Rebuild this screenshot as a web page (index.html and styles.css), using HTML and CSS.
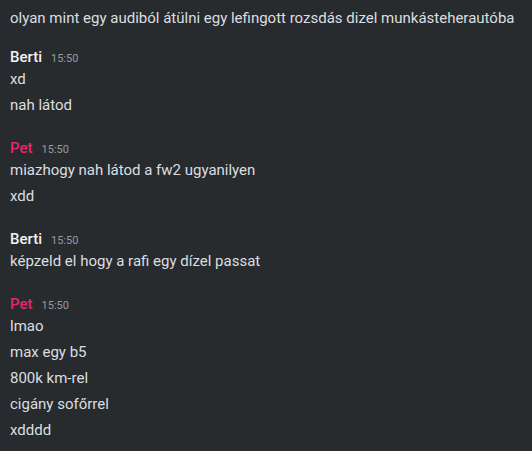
FILE: index.html
```html
<!DOCTYPE html>
<html lang="hu">
<head>
  <meta charset="UTF-8">
  <meta name="viewport" content="width=device-width, initial-scale=1.0">
  <title>Chat</title>
  <link rel="stylesheet" href="styles.css">
</head>
<body>
  <div class="chat">
    <div class="group first">
      <div class="msg">olyan mint egy audiból átülni egy lefingott rozsdás dizel munkásteherautóba</div>
    </div>

    <div class="group">
      <div class="header"><span class="name">Berti</span><span class="time">15:50</span></div>
      <div class="msg">xd</div>
      <div class="msg">nah látod</div>
    </div>

    <div class="group">
      <div class="header"><span class="name pet">Pet</span><span class="time">15:50</span></div>
      <div class="msg">miazhogy nah látod a fw2 ugyanilyen</div>
      <div class="msg">xdd</div>
    </div>

    <div class="group">
      <div class="header"><span class="name">Berti</span><span class="time">15:50</span></div>
      <div class="msg">képzeld el hogy a rafi egy dízel passat</div>
    </div>

    <div class="group">
      <div class="header"><span class="name pet">Pet</span><span class="time">15:50</span></div>
      <div class="msg">lmao</div>
      <div class="msg">max egy b5</div>
      <div class="msg">800k km-rel</div>
      <div class="msg">cigány sofőrrel</div>
      <div class="msg">xdddd</div>
    </div>
  </div>
</body>
</html>
```

FILE: styles.css
```css
body {
  margin: 0;
  padding: 0;
  background-color: #282b2d; /* sötét háttér */
  font-family: Roboto, "Noto Sans", sans-serif;
  color: #dbdee1;
}
.chat {
  display: flex;
  flex-direction: column;
  gap: 21px;
  padding: 5px 10px 0 10px;
}
.group {
  display: flex;
  flex-direction: column;
}
.group.first {
  margin-bottom: -4px;
}
.header {
  display: flex;
  align-items: baseline;
  gap: 9px;
  height: 18px;
  line-height: 18px;
}
.name {
  font-size: 15px;
  font-weight: 500;
  color: #f2f3f5;
}
.name.pet {
  color: #e5286b;
}
.time {
  font-size: 11px;
  color: #949ba4;
}
.msg {
  font-size: 15px;
  line-height: 26px;
  height: 26px;
  white-space: nowrap;
}
```
